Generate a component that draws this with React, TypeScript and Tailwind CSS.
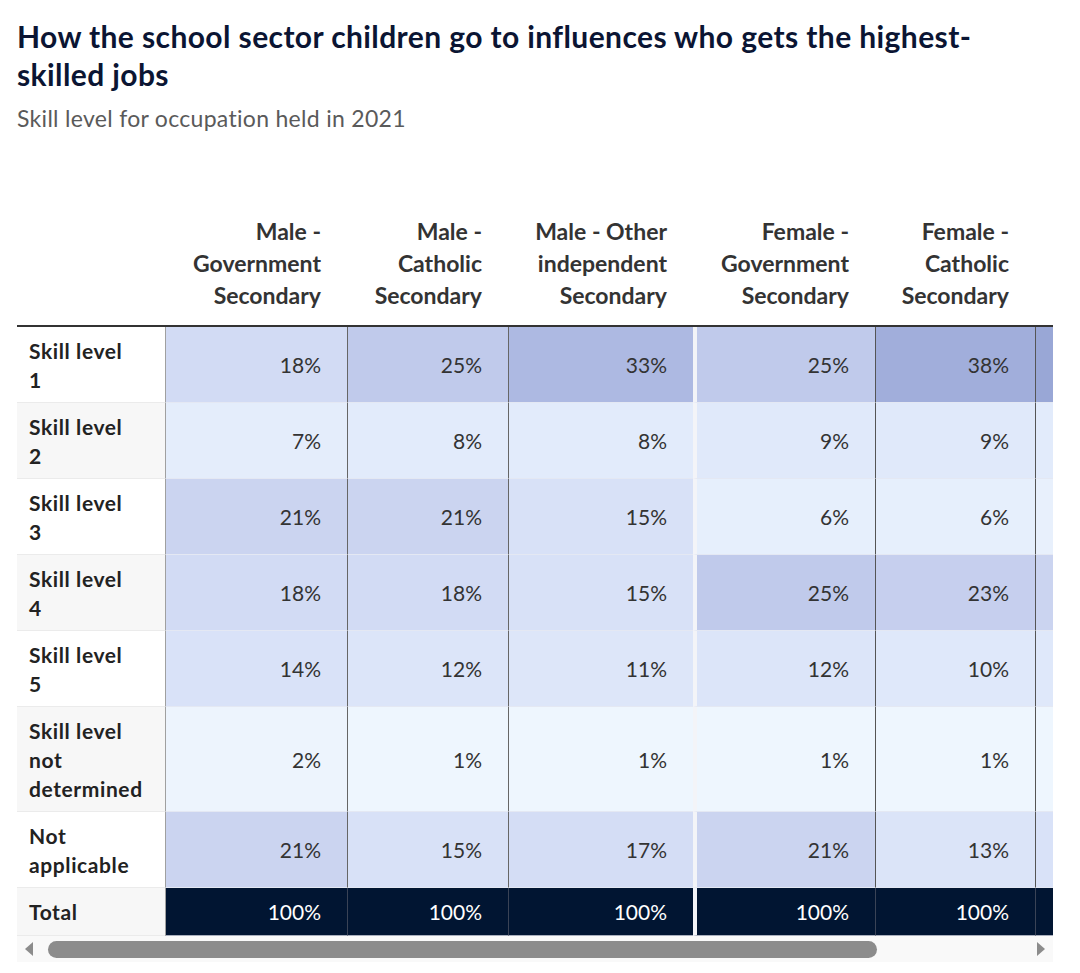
import React from "react"

// Skill level table, male/female by school sector
type Row = { label: string[]; values: number[] }

const columns = [
  { lines: ["Male -", "Government", "Secondary"], width: "w-[182px]" },
  { lines: ["Male -", "Catholic", "Secondary"], width: "w-[161px]" },
  { lines: ["Male - Other", "independent", "Secondary"], width: "w-[185px]" },
  { lines: ["Female -", "Government", "Secondary"], width: "w-[182px]" },
  { lines: ["Female -", "Catholic", "Secondary"], width: "w-[160px]" },
  // only a sliver of the next column shows before the scroll edge
  { lines: [], width: "w-[18px]" },
]

const rows: Row[] = [
  { label: ["Skill level", "1"], values: [18, 25, 33, 25, 38, 42] },
  { label: ["Skill level", "2"], values: [7, 8, 8, 9, 9, 8] },
  { label: ["Skill level", "3"], values: [21, 21, 15, 6, 6, 5] },
  { label: ["Skill level", "4"], values: [18, 18, 15, 25, 23, 21] },
  { label: ["Skill level", "5"], values: [14, 12, 11, 12, 10, 10] },
  { label: ["Skill level", "not", "determined"], values: [2, 1, 1, 1, 1, 1] },
  { label: ["Not", "applicable"], values: [21, 15, 17, 21, 13, 14] },
]

// colour stops read off the picture
const stops: [number, [number, number, number]][] = [
  [0, [240, 247, 254]],
  [6, [230, 239, 252]],
  [9, [224, 233, 250]],
  [15, [216, 225, 247]],
  [21, [203, 212, 240]],
  [25, [192, 202, 235]],
  [33, [173, 185, 226]],
  [38, [161, 174, 219]],
  [45, [147, 161, 210]],
]

function colorFor(v: number) {
  for (let i = 0; i < stops.length - 1; i++) {
    const [a, ca] = stops[i]
    const [b, cb] = stops[i + 1]
    if (v >= a && v <= b) {
      const t = (v - a) / (b - a)
      const c = ca.map((x, k) => Math.round(x + (cb[k] - x) * t))
      return `rgb(${c[0]},${c[1]},${c[2]})`
    }
  }
  const c = stops[stops.length - 1][1]
  return `rgb(${c[0]},${c[1]},${c[2]})`
}

// left border per data column
const colBorder = [
  "border-l border-l-[#a0a0a0]",
  "border-l border-l-[#666]",
  "border-l border-l-[#666]",
  "border-l-4 border-l-[#f3f4f8]",
  "border-l border-l-[#555]",
  "border-l border-l-[#555]",
]

const totalBorder = [
  "border-l border-l-[#a0a0a0]",
  "border-l border-l-[#3a4356]",
  "border-l border-l-[#3a4356]",
  "border-l-4 border-l-[#f3f4f8]",
  "border-l border-l-[#3a4356]",
  "border-l border-l-[#3a4356]",
]

export default function App() {
  return (
    <div className="min-h-screen bg-white font-['Lato',sans-serif]">
      <div className="ml-[17px] w-[1036px] pt-[17px]">
        <h1 className="text-[30px] font-bold leading-[38px] tracking-[0.4px] text-[#0b1533]">
          How the school sector children go to influences who gets the highest-
          <br />
          skilled jobs
        </h1>
        <p className="mt-[11px] text-[23px] leading-[28px] tracking-[0.3px] text-[#5a5a5a]">
          Skill level for occupation held in 2021
        </p>

        <div className="mt-[83px] w-[1036px] overflow-hidden">
          <table className="w-[1036px] table-fixed border-separate border-spacing-0">
            <thead>
              <tr>
                <th className="w-[148px] border-b-2 border-b-[#333]"></th>
                {columns.map((col, i) => (
                  <th
                    key={i}
                    className={`${col.width} border-b-2 border-b-[#333] pb-[14px] ${i < 5 ? "pr-[26px]" : ""} text-right align-bottom text-[23px] font-bold leading-[32px] text-[#333]`}
                  >
                    {col.lines.map((l, k) => (
                      <div key={k} className="whitespace-nowrap">{l}</div>
                    ))}
                  </th>
                ))}
              </tr>
            </thead>
            <tbody>
              {rows.map((row, r) => (
                <tr key={r}>
                  <td
                    className={`${r % 2 === 1 ? "bg-[#f7f7f7]" : "bg-white"} border-b border-b-[#ebebeb] pb-[8px] pl-[12px] pt-[9px] align-top text-[21px] font-bold leading-[29px] tracking-[0.6px] text-[#222]`}
                  >
                    {row.label.map((l, k) => (
                      <div key={k} className="whitespace-nowrap">{l}</div>
                    ))}
                  </td>
                  {row.values.map((v, c) => (
                    <td
                      key={c}
                      className={`${colBorder[c]} border-b border-b-[#e4e8f3] ${c < 5 ? "pr-[26px]" : ""} text-right align-middle text-[21px] leading-[29px] text-[#333]`}
                      style={{ backgroundColor: colorFor(v) }}
                    >
                      {c < 5 ? `${v}%` : ""}
                    </td>
                  ))}
                </tr>
              ))}
              <tr>
                <td className="border-b border-b-[#ebebeb] bg-[#f7f7f7] pb-[9px] pl-[12px] pt-[9px] text-[21px] font-bold leading-[29px] tracking-[0.6px] text-[#222]">
                  Total
                </td>
                {columns.map((_, c) => (
                  <td
                    key={c}
                    className={`${totalBorder[c]} border-b border-b-[#a9afbd] bg-[#011532] ${c < 5 ? "pr-[26px]" : ""} text-right text-[21px] leading-[29px] text-white`}
                  >
                    {c < 5 ? "100%" : ""}
                  </td>
                ))}
              </tr>
            </tbody>
          </table>
        </div>

        {/* scrollbar */}
        <div className="flex h-[26px] w-[1036px] items-center bg-[#f9f9f9]">
          <svg width="8" height="14" viewBox="0 0 8 14" className="ml-[8px]">
            <polygon points="8,0 0,7 8,14" fill="#8c8c8c" />
          </svg>
          <div className="ml-[15px] h-[17px] w-[829px] rounded-full bg-[#8c8c8c]"></div>
          <svg width="8" height="14" viewBox="0 0 8 14" className="ml-auto mr-[8px]">
            <polygon points="0,0 8,7 0,14" fill="#8c8c8c" />
          </svg>
        </div>
      </div>
    </div>
  )
}
